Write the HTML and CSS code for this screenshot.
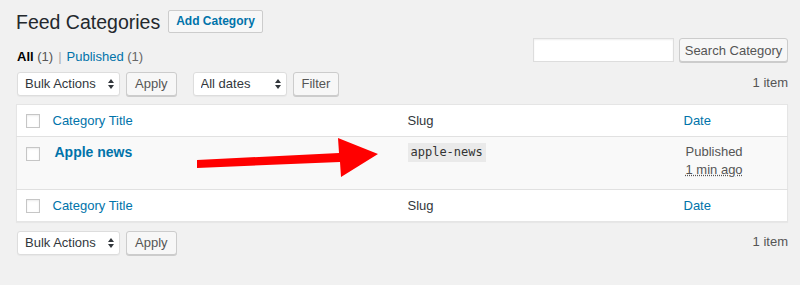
FILE: index.html
```html
<!DOCTYPE html>
<html lang="en">
<head>
  <meta charset="UTF-8">
  <title>Feed Categories</title>
  <link rel="stylesheet" href="styles.css">
</head>
<body>
  <div class="wrap">
    <div class="page-head">
      <h1>Feed Categories</h1>
      <a class="page-title-action" href="#">Add Category</a>
    </div>

    <div class="top-row">
      <ul class="subsubsub">
        <li class="current">All <span class="count">(1)</span></li>
        <li class="sep">|</li>
        <li><a href="#">Published</a> <span class="count">(1)</span></li>
      </ul>
      <div class="search-box">
        <input type="search" class="search-input">
        <button class="button">Search Category</button>
      </div>
    </div>

    <div class="tablenav">
      <div class="actions">
        <span class="select-wrap bulk">
          <select><option>Bulk Actions</option></select>
          <svg class="updown" width="6" height="10" viewBox="0 0 6 10"><path d="M3 0 L6 4 L0 4 Z M0 6 L6 6 L3 10 Z" fill="#32373c"/></svg>
        </span>
        <button class="button">Apply</button>
      </div>
      <div class="actions">
        <span class="select-wrap dates">
          <select><option>All dates</option></select>
          <svg class="updown" width="6" height="10" viewBox="0 0 6 10"><path d="M3 0 L6 4 L0 4 Z M0 6 L6 6 L3 10 Z" fill="#32373c"/></svg>
        </span>
        <button class="button">Filter</button>
      </div>
      <div class="displaying-num">1 item</div>
    </div>

    <table class="list-table">
      <colgroup>
        <col class="col-check">
        <col class="col-title">
        <col class="col-slug">
        <col class="col-date">
      </colgroup>
      <thead>
        <tr>
          <td class="check-column"><span class="checkbox"></span></td>
          <th><a href="#">Category Title</a></th>
          <th>Slug</th>
          <th><a href="#">Date</a></th>
        </tr>
      </thead>
      <tbody>
        <tr class="alternate">
          <td class="check-column"><span class="checkbox"></span></td>
          <td><a class="row-title" href="#">Apple news</a></td>
          <td><code>apple-news</code></td>
          <td class="date">Published<br><abbr title="2 minutes ago">1 min ago</abbr></td>
        </tr>
      </tbody>
      <tfoot>
        <tr>
          <td class="check-column"><span class="checkbox"></span></td>
          <th><a href="#">Category Title</a></th>
          <th>Slug</th>
          <th><a href="#">Date</a></th>
        </tr>
      </tfoot>
    </table>

    <div class="tablenav bottom">
      <div class="actions">
        <span class="select-wrap bulk">
          <select><option>Bulk Actions</option></select>
          <svg class="updown" width="6" height="10" viewBox="0 0 6 10"><path d="M3 0 L6 4 L0 4 Z M0 6 L6 6 L3 10 Z" fill="#32373c"/></svg>
        </span>
        <button class="button">Apply</button>
      </div>
      <div class="displaying-num">1 item</div>
    </div>
  </div>

  <!-- annotation drawn over the screenshot -->
  <svg class="annotation" width="800" height="285" viewBox="0 0 800 285">
    <polygon points="197,160 339,153 338,138 378,154 341,177 340,162 197,168" fill="#ff0000"/>
  </svg>
</body>
</html>
```

FILE: styles.css
```css
body {
  margin: 0;
  background: #f1f1f1;
  color: #444;
  font-family: "Liberation Sans", Arial, sans-serif;
  font-size: 13px;
  line-height: 1.4;
  position: relative;
  height: 285px;
  overflow: hidden;
}
a {
  color: #0073aa;
  text-decoration: none;
}
.wrap {
  padding: 10px 12px 0 16px;
}
.page-head {
  display: flex;
  align-items: center;
  height: 23px;
}
h1 {
  margin: 0 8px 0 0;
  padding-top: 2px;
  font-size: 19.5px;
  font-weight: 400;
  color: #23282d;
  line-height: 23px;
}
.page-title-action {
  display: inline-block;
  box-sizing: border-box;
  height: 23px;
  line-height: 21px;
  padding: 0 7px;
  border: 1px solid #ccc;
  border-radius: 2px;
  background: #f7f7f7;
  font-weight: 700;
  font-size: 12px;
}
.top-row {
  display: flex;
  justify-content: space-between;
  margin-top: 5px;
  height: 24px;
}
.subsubsub {
  list-style: none;
  margin: 11px 0 0 1px;
  padding: 0;
  display: flex;
  gap: 5px;
  line-height: 16px;
  color: #666;
}
.subsubsub .current {
  color: #000;
  font-weight: 600;
}
.subsubsub .current .count {
  font-weight: 400;
  color: #555;
}
.subsubsub .sep {
  color: #aaa;
}
.search-box {
  display: flex;
  gap: 5px;
}
.search-input {
  width: 141px;
  height: 24px;
  box-sizing: border-box;
  margin: 0;
  border: 1px solid #ddd;
  background: #fff;
  box-shadow: inset 0 1px 2px rgba(0,0,0,0.07);
}
.button {
  box-sizing: border-box;
  height: 24px;
  margin: 0;
  padding: 0 8px;
  border: 1px solid #ccc;
  border-radius: 3px;
  background: #f7f7f7;
  box-shadow: 0 1px 0 #ccc;
  color: #555;
  font-family: "Liberation Sans", Arial, sans-serif;
  font-size: 13px;
  white-space: nowrap;
  cursor: pointer;
}
.search-box .button {
  width: 109px;
  padding: 0 4px;
}
.tablenav {
  display: flex;
  align-items: center;
  margin-top: 9px;
  height: 25px;
}
.tablenav .actions {
  display: flex;
  gap: 6px;
  margin-right: 16px;
}
.tablenav .displaying-num {
  margin-left: auto;
  color: #555;
}
.select-wrap {
  position: relative;
  display: inline-block;
}
.select-wrap select {
  -webkit-appearance: none;
  appearance: none;
  box-sizing: border-box;
  height: 24px;
  margin: 0;
  padding: 0 20px 0 7px;
  border: 1px solid #ddd;
  border-radius: 3px;
  background: #fff;
  box-shadow: 0 1px 1px rgba(0,0,0,0.04);
  color: #32373c;
  font-family: "Liberation Sans", Arial, sans-serif;
  font-size: 13px;
}
.select-wrap.bulk select {
  width: 103px;
  margin-left: 1px;
}
.select-wrap.dates select {
  width: 94px;
}
.select-wrap .updown {
  position: absolute;
  right: 6px;
  top: 7px;
  pointer-events: none;
}
.list-table {
  margin-top: 8px;
  width: 772px;
  table-layout: fixed;
  border-collapse: collapse;
  border: 1px solid #e5e5e5;
  background: #fff;
  box-shadow: 0 1px 1px rgba(0,0,0,0.04);
}
.col-check { width: 28px; }
.col-title { width: 355px; }
.col-slug { width: 276px; }
.list-table th,
.list-table td {
  text-align: left;
  font-weight: 400;
  padding: 0 8px;
  vertical-align: top;
}
.list-table thead th,
.list-table thead td,
.list-table tfoot th,
.list-table tfoot td {
  padding-top: 7px;
  padding-bottom: 7px;
  line-height: 17px;
  vertical-align: middle;
  color: #32373c;
}
.list-table thead tr {
  border-bottom: 1px solid #e1e1e1;
}
.list-table tfoot tr {
  border-top: 1px solid #e1e1e1;
}
.list-table .check-column {
  padding-left: 9px;
  padding-right: 0;
}
.checkbox {
  display: block;
  box-sizing: border-box;
  width: 14px;
  height: 14px;
  border: 1px solid #c6c6c6;
  background: #fff;
  box-shadow: inset 0 1px 2px rgba(0,0,0,0.08);
}
.list-table tbody tr.alternate {
  background: #f9f9f9;
}
.list-table tbody td {
  padding-top: 6px;
  padding-bottom: 10px;
  line-height: 18px;
  color: #555;
}
.list-table tbody .check-column {
  padding-top: 10px;
  padding-bottom: 0;
}
.row-title {
  display: inline-block;
  margin-left: 2px;
  font-size: 14px;
  font-weight: 700;
}
code {
  display: inline-block;
  padding: 1px 3px;
  background: #eaeaea;
  color: #333;
  font-family: "DejaVu Sans Mono", "Liberation Mono", monospace;
  font-size: 12px;
  line-height: 17px;
}
.list-table td.date {
  padding-left: 10px;
}
abbr {
  text-decoration: underline dotted;
}
.tablenav.bottom {
  margin-top: 8px;
}
.annotation {
  position: absolute;
  left: 0;
  top: 0;
  pointer-events: none;
}
```
